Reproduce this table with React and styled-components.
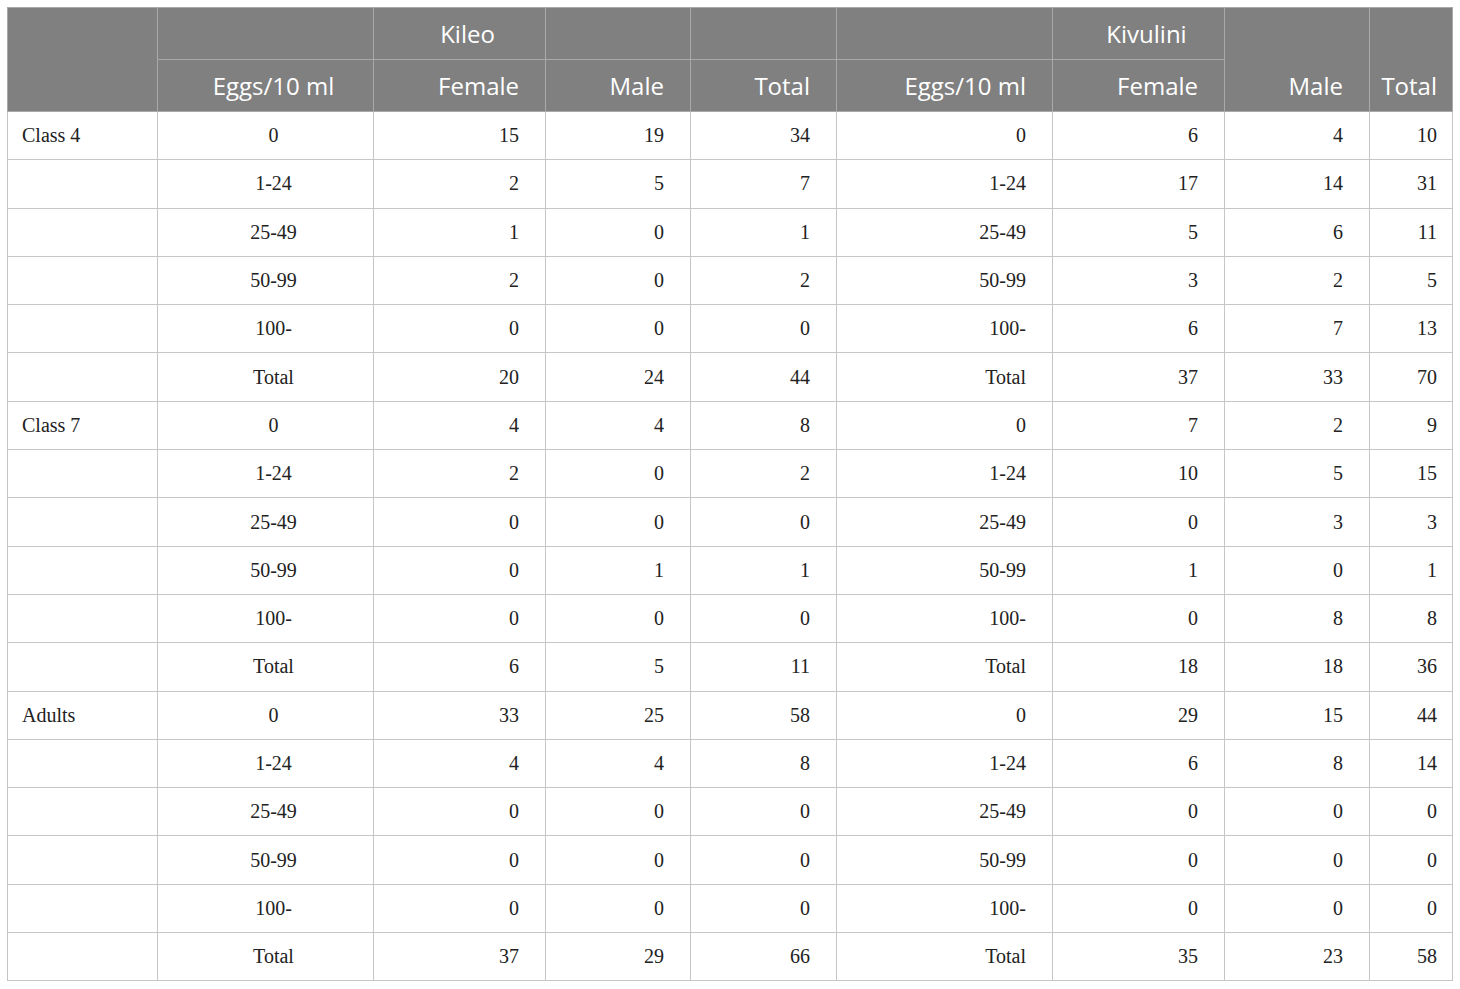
import styled, { createGlobalStyle } from "styled-components";

const GlobalStyle = createGlobalStyle`
  body {
    margin: 0;
    background: #fff;
  }
`

const Page = styled.div`
  padding: 7px 0 0 7px;
`

const Table = styled.table`
  width: 1445px;
  table-layout: fixed;
  border-collapse: collapse;
  border: 1px solid #c6c6c6;
`

const HeadCell = styled.th`
  height: 52px;
  box-sizing: border-box;
  background: #808080;
  color: #fff;
  font-family: "Open Sans", "Liberation Sans", sans-serif;
  font-size: 24px;
  font-weight: 400;
  line-height: 32px;
  border: 1px solid #a9a9a9;
  vertical-align: bottom;
  padding: 0 ${p => (p.$last ? 15 : 26)}px 9px 0;
  text-align: ${p => p.$align || "right"};
  ${p => p.$align === "center" && "padding: 0 0 9px 16px;"}
`

const Cell = styled.td`
  height: 48.3px;
  box-sizing: border-box;
  font-family: "Liberation Serif", "Times New Roman", serif;
  font-size: 20px;
  color: #222;
  border: 1px solid #c6c6c6;
  vertical-align: middle;
  padding: 0 ${p => (p.$last ? 15 : 26)}px 0 0;
  text-align: ${p => p.$align || "right"};
  ${p => p.$align === "left" && "padding: 0 0 0 14px;"}
  ${p => p.$align === "center" && "padding: 0 0 0 16px;"}
`

const widths = [150, 216, 172, 145, 146, 216, 172, 145, 83];

const groups = [
  {
    name: "Class 4",
    rows: [
      ["0", 15, 19, 34, 6, 4, 10],
      ["1-24", 2, 5, 7, 17, 14, 31],
      ["25-49", 1, 0, 1, 5, 6, 11],
      ["50-99", 2, 0, 2, 3, 2, 5],
      ["100-", 0, 0, 0, 6, 7, 13],
      ["Total", 20, 24, 44, 37, 33, 70],
    ],
  },
  {
    name: "Class 7",
    rows: [
      ["0", 4, 4, 8, 7, 2, 9],
      ["1-24", 2, 0, 2, 10, 5, 15],
      ["25-49", 0, 0, 0, 0, 3, 3],
      ["50-99", 0, 1, 1, 1, 0, 1],
      ["100-", 0, 0, 0, 0, 8, 8],
      ["Total", 6, 5, 11, 18, 18, 36],
    ],
  },
  {
    name: "Adults",
    rows: [
      ["0", 33, 25, 58, 29, 15, 44],
      ["1-24", 4, 4, 8, 6, 8, 14],
      ["25-49", 0, 0, 0, 0, 0, 0],
      ["50-99", 0, 0, 0, 0, 0, 0],
      ["100-", 0, 0, 0, 0, 0, 0],
      ["Total", 37, 29, 66, 35, 23, 58],
    ],
  },
];

const App = () => {
  return (
    <>
      <GlobalStyle />
      <Page>
        <Table>
          <colgroup>
            {widths.map((w, i) => <col key={i} style={{ width: w }} />)}
          </colgroup>
          <thead>
            <tr>
              <HeadCell rowSpan={2} />
              <HeadCell />
              <HeadCell $align="center">Kileo</HeadCell>
              <HeadCell />
              <HeadCell />
              <HeadCell />
              <HeadCell $align="center">Kivulini</HeadCell>
              <HeadCell rowSpan={2}>Male</HeadCell>
              <HeadCell rowSpan={2} $last>Total</HeadCell>
            </tr>
            <tr>
              <HeadCell $align="center">Eggs/10 ml</HeadCell>
              <HeadCell>Female</HeadCell>
              <HeadCell>Male</HeadCell>
              <HeadCell>Total</HeadCell>
              <HeadCell>Eggs/10 ml</HeadCell>
              <HeadCell>Female</HeadCell>
            </tr>
          </thead>
          <tbody>
            {groups.map(g =>
              g.rows.map((r, i) => (
                <tr key={g.name + i}>
                  <Cell $align="left">{i === 0 ? g.name : ""}</Cell>
                  <Cell $align="center">{r[0]}</Cell>
                  <Cell>{r[1]}</Cell>
                  <Cell>{r[2]}</Cell>
                  <Cell>{r[3]}</Cell>
                  <Cell>{r[0]}</Cell>
                  <Cell>{r[4]}</Cell>
                  <Cell>{r[5]}</Cell>
                  <Cell $last>{r[6]}</Cell>
                </tr>
              ))
            )}
          </tbody>
        </Table>
      </Page>
    </>
  )
}

export default App
